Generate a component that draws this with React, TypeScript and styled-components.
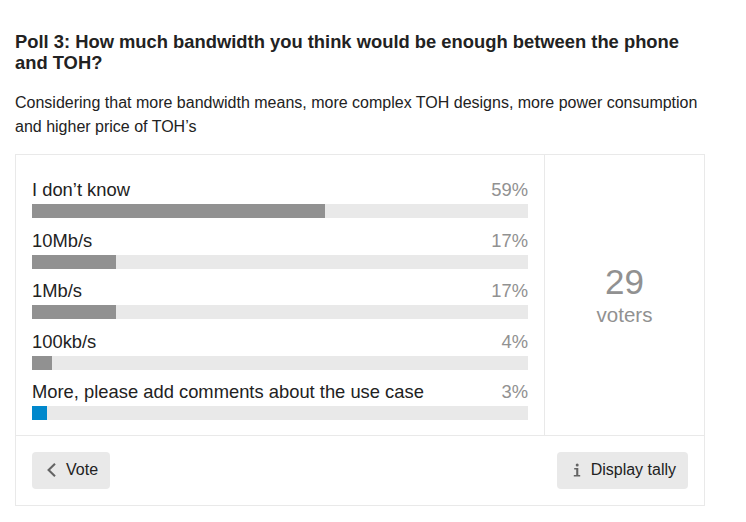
import React, { FC } from 'react'
import styled, { createGlobalStyle } from 'styled-components'

const GlobalStyle = createGlobalStyle`
  body {
    margin: 0;
    background: #fff;
    color: #222;
    font-family: 'Liberation Sans', Arial, sans-serif;
    font-size: 16px;
  }
`

const Page = styled.div`
  width: 690px;
  margin-left: 15px;
  padding-top: 31px;
`

const Title = styled.h2`
  margin: 0 0 18px;
  font-size: 18.38px;
  line-height: 21px;
  font-weight: bold;
  color: #222;
`

const Description = styled.p`
  margin: 0 0 15px;
  font-size: 16px;
  line-height: 24px;
  color: #222;
`

const Poll = styled.div`
  border: 1px solid #e9e9e9;
`

const PollBody = styled.div`
  display: grid;
  grid-template-columns: 1fr 160px;
`

const Results = styled.ul`
  list-style: none;
  margin: 0;
  padding: 24px 16px 15px;
`

const Option = styled.li`
  margin-bottom: 11.5px;

  &:last-child {
    margin-bottom: 0;
  }
`

const OptionHeader = styled.div`
  display: flex;
  justify-content: space-between;
  font-size: 18.38px;
  line-height: 21px;
  margin-bottom: 4px;
`

const OptionLabel = styled.span`
  color: #222;
`

const OptionPercent = styled.span`
  color: #919191;
`

const Track = styled.div`
  height: 14px;
  background: #e9e9e9;
`

const Fill = styled.div<{ $highlight?: boolean }>`
  height: 100%;
  background: ${({ $highlight }) => ($highlight ? '#0088cc' : '#919191')};
`

const Info = styled.div`
  border-left: 1px solid #e9e9e9;
  display: flex;
  flex-direction: column;
  align-items: center;
  justify-content: center;
  color: #919191;
`

const InfoNumber = styled.span`
  font-size: 35px;
  line-height: 1;
`

const InfoText = styled.span`
  font-size: 20.5px;
  line-height: 1;
  margin-top: 6px;
`

const Buttons = styled.div`
  border-top: 1px solid #e9e9e9;
  padding: 16px;
  display: flex;
  justify-content: space-between;
`

const Button = styled.button`
  display: inline-flex;
  align-items: center;
  padding: 8px 11px 8px 12px;
  border: 1px solid transparent;
  border-radius: 4px;
  background: #e9e9e9;
  color: #222;
  font-family: 'Liberation Sans', Arial, sans-serif;
  font-size: 16px;
  line-height: 18.5px;
  cursor: pointer;

  svg {
    width: 14px;
    height: 16px;
    margin-right: 7px;
    flex-shrink: 0;
  }
`

const ChevronLeft: FC = () => (
  <svg viewBox='0 0 14 16' fill='none'>
    <path d='M10 1.8 L3.6 8 L10 14.2' stroke='#646464' strokeWidth='2.1' />
  </svg>
)

const InfoIcon: FC = () => (
  <svg viewBox='0 0 14 16' fill='#646464'>
    <circle cx='7.2' cy='3' r='1.5' />
    <path d='M4.2 6 H8.3 V13 H10.2 V14.6 H3.8 V13 H6.2 V7.6 H4.2 Z' />
  </svg>
)

const options = [
  { label: 'I don’t know', percent: 59 },
  { label: '10Mb/s', percent: 17 },
  { label: '1Mb/s', percent: 17 },
  { label: '100kb/s', percent: 4 },
  { label: 'More, please add comments about the use case', percent: 3, highlight: true },
]

const App: FC = () => (
  <>
    <GlobalStyle />
    <Page>
      <Title>Poll 3: How much bandwidth you think would be enough between the phone and TOH?</Title>
      <Description>
        Considering that more bandwidth means, more complex TOH designs, more power consumption and higher price of
        TOH’s
      </Description>
      <Poll>
        <PollBody>
          <Results>
            {options.map((o) => (
              <Option key={o.label}>
                <OptionHeader>
                  <OptionLabel>{o.label}</OptionLabel>
                  <OptionPercent>{o.percent}%</OptionPercent>
                </OptionHeader>
                <Track>
                  <Fill $highlight={o.highlight} style={{ width: `${o.percent}%` }} />
                </Track>
              </Option>
            ))}
          </Results>
          <Info>
            <InfoNumber>29</InfoNumber>
            <InfoText>voters</InfoText>
          </Info>
        </PollBody>
        <Buttons>
          <Button>
            <ChevronLeft />
            Vote
          </Button>
          <Button>
            <InfoIcon />
            Display tally
          </Button>
        </Buttons>
      </Poll>
    </Page>
  </>
)

export default App
